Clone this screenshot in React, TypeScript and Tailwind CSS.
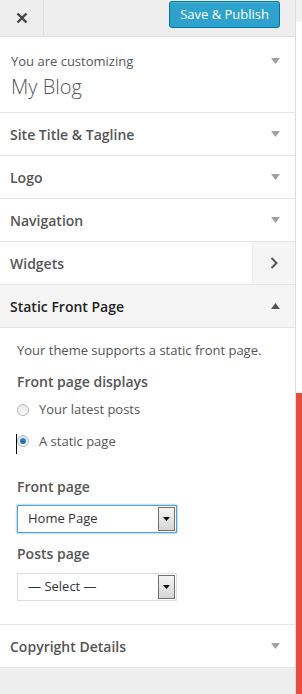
import React from 'react';

const font = { fontFamily: '"Open Sans", "Noto Sans", sans-serif' };

function DownArrow({ dark = false }: { dark?: boolean }) {
    return (
        <svg width="9" height="6" viewBox="0 0 9 6" className="shrink-0">
            <path d="M0 0 L9 0 L4.5 6 Z" fill={dark ? '#555' : '#a0a0a0'} />
        </svg>
    );
}

function UpArrow() {
    return (
        <svg width="9" height="6" viewBox="0 0 9 6" className="shrink-0">
            <path d="M0 6 L9 6 L4.5 0 Z" fill="#555" />
        </svg>
    );
}

function Section({ title }: { title: string }) {
    return (
        <div className="flex h-[43px] items-center justify-between border-b border-[#e5e5e5] bg-white pl-[10px] pr-[15px]">
            <span className="text-[14px] font-semibold text-[#555]">{title}</span>
            <DownArrow />
        </div>
    );
}

function Radio({ checked, label, caret }: { checked?: boolean; label: string; caret?: boolean }) {
    return (
        <div className="relative flex items-center gap-[10px] pl-[13px]">
            {caret && <span className="absolute left-[12px] top-[2px] h-[20px] w-px bg-black" />}
            <span className="flex h-[12px] w-[12px] items-center justify-center rounded-full border border-[#b4b9be] bg-gradient-to-b from-[#e8e8e8] to-[#fafafa]">
                {checked && <span className="h-[6px] w-[6px] rounded-full bg-gradient-to-b from-[#3b8ed6] to-[#1e5fa0]" />}
            </span>
            <span className="text-[13px] text-[#555]">{label}</span>
        </div>
    );
}

function Select({ value, focused }: { value: string; focused?: boolean }) {
    return (
        <div
            className={
                focused
                    ? 'flex h-[28px] w-[160px] items-center justify-between border border-[#5b9dd9] bg-white pl-[10px] pr-[1px] shadow-[0_0_2px_rgba(30,140,190,0.8)]'
                    : 'flex h-[28px] w-[160px] items-center justify-between border border-[#ddd] bg-white pl-[10px] pr-[1px]'
            }
        >
            <span className="text-[13px] text-[#333]">{value}</span>
            <span className="flex h-[24px] w-[17px] items-center justify-center border border-[#707070] bg-gradient-to-b from-[#f4f4f4] to-[#d6d6d6]">
                <svg width="7" height="4" viewBox="0 0 7 4">
                    <path d="M0 0 L7 0 L3.5 4 Z" fill="#000" />
                </svg>
            </span>
        </div>
    );
}

export default function App() {
    return (
        <div className="flex h-[694px] w-[302px] overflow-hidden bg-white" style={font}>
            <div className="flex w-[296px] shrink-0 flex-col border-r border-[#ddd] bg-[#eee]">
                {/* Header */}
                <div className="flex h-[37px] shrink-0 items-start justify-between border-b border-[#ddd]">
                    <div className="flex h-full w-[44px] items-center justify-center border-r border-[#ddd]">
                        <svg width="12" height="12" viewBox="0 0 12 12">
                            <path d="M1.5 1.5 L10.5 10.5 M10.5 1.5 L1.5 10.5" stroke="#444" strokeWidth="2.4" />
                        </svg>
                    </div>
                    <button className="mr-[15px] mt-[1px] h-[27px] rounded-[3px] border border-[#0074a2] bg-[#2ea2cc] px-[10px] text-[13px] leading-none text-white shadow-[inset_0_1px_0_rgba(120,200,230,0.5)]">
                        Save &amp; Publish
                    </button>
                </div>

                {/* Customizing info */}
                <div className="flex h-[76px] shrink-0 items-start justify-between border-b border-[#e5e5e5] bg-white pl-[11px] pr-[15px] pt-[15px]">
                    <div className="flex flex-col">
                        <span className="text-[13px] leading-[18px] text-[#555]">You are customizing</span>
                        <span className="mt-[3px] text-[20px] font-light leading-[28px] text-[#555]">My Blog</span>
                    </div>
                    <div className="pt-[6px]">
                        <DownArrow />
                    </div>
                </div>

                <Section title="Site Title & Tagline" />
                <Section title="Logo" />
                <Section title="Navigation" />

                {/* Widgets */}
                <div className="flex h-[43px] items-stretch border-b border-[#e5e5e5] bg-white">
                    <div className="flex flex-1 items-center pl-[10px]">
                        <span className="text-[14px] font-semibold text-[#555]">Widgets</span>
                    </div>
                    <div className="flex w-[43px] items-center justify-center border-l border-[#eee] bg-[#f5f5f5]">
                        <svg width="8" height="12" viewBox="0 0 8 12">
                            <path d="M1.5 1 L6.5 6 L1.5 11" stroke="#555" strokeWidth="2" fill="none" />
                        </svg>
                    </div>
                </div>

                {/* Static Front Page, open */}
                <div className="flex h-[43px] items-center justify-between border-b border-[#e5e5e5] bg-[#f5f5f5] pl-[10px] pr-[15px]">
                    <span className="text-[14px] font-semibold text-[#222]">Static Front Page</span>
                    <UpArrow />
                </div>
                <div className="flex h-[297px] shrink-0 flex-col border-b border-[#e5e5e5] bg-white pl-[17px] pt-[12px]">
                    <p className="text-[13px] leading-[20px] text-[#555]">Your theme supports a static front page.</p>
                    <p className="mt-[12px] text-[14px] font-semibold leading-[20px] text-[#555]">Front page displays</p>
                    <div className="-ml-[13px] mt-[8px] flex flex-col gap-[12px]">
                        <Radio label="Your latest posts" />
                        <Radio label="A static page" checked caret />
                    </div>
                    <p className="mt-[26px] text-[14px] font-semibold leading-[20px] text-[#555]">Front page</p>
                    <div className="mt-[8px]">
                        <Select value="Home Page" focused />
                    </div>
                    <p className="mt-[11px] text-[14px] font-semibold leading-[20px] text-[#555]">Posts page</p>
                    <div className="mt-[9px]">
                        <Select value="— Select —" />
                    </div>
                </div>

                <Section title="Copyright Details" />
                <div className="flex-1 bg-[#eee]" />
            </div>

            {/* Preview strip */}
            <div className="flex flex-1 flex-col bg-white">
                <div className="h-[22px] bg-[#f1f1f1]" />
                <div className="h-[371px]" />
                <div className="flex-1 bg-[#e74c3c]" />
            </div>
        </div>
    );
}
